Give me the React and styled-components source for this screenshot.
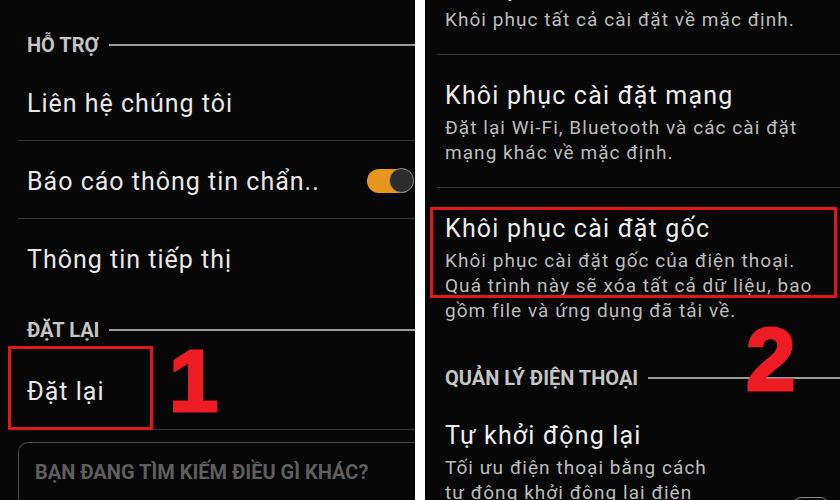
import React from "react";
import styled, { createGlobalStyle } from "styled-components";

const GlobalStyle = createGlobalStyle`
  html, body {
    margin: 0;
    padding: 0;
    background: #fff;
  }
  body {
    font-family: "Roboto", "Noto Sans", sans-serif;
  }
`;

const Frame = styled.div`
  width: 840px;
  height: 500px;
  display: flex;
  gap: 10px;
  overflow: hidden;
  background: #fff;
`;

const Screen = styled.div`
  position: relative;
  width: ${(p) => p.$w}px;
  height: 500px;
  overflow: hidden;
  background: #070707;
`;

const SectionHeader = styled.div`
  display: flex;
  align-items: center;
  gap: 10px;
  height: 24px;
  margin: ${(p) => p.$margin};
  padding-left: ${(p) => p.$indent}px;
  font-size: 20px;
  font-weight: 700;
  color: #c4c4c4;
  white-space: nowrap;

  &::after {
    content: "";
    flex: 1;
    height: 2px;
    background: #9a9a9a;
  }
`;

const Row = styled.div`
  display: flex;
  align-items: center;
  justify-content: space-between;
  box-sizing: border-box;
  height: ${(p) => p.$h || 78}px;
  margin-left: 18px;
  padding: ${(p) => p.$pt ?? 3}px 2px 0 9px;
  border-bottom: ${(p) => (p.$divider ? "1px solid #343434" : "none")};
  font-size: 25px;
  letter-spacing: 1px;
  color: #e8e8e8;
`;

const Toggle = styled.div`
  position: relative;
  width: 46px;
  height: 24px;
  border-radius: 12px;
  background: #e8951d;

  &::after {
    content: "";
    position: absolute;
    right: -1px;
    top: -1px;
    width: 23px;
    height: 23px;
    border-radius: 50%;
    background: #2c2c2c;
    border: 1.5px solid #8c8c8c;
  }
`;

const SearchBox = styled.div`
  box-sizing: border-box;
  height: 80px;
  margin: 12px 0 0 18px;
  padding: 17px 0 0 16px;
  border: 1.5px solid #484848;
  border-right: none;
  border-radius: 10px 0 0 10px;
  font-size: 20px;
  font-weight: 700;
  line-height: 24px;
  color: #5e5e5e;
  white-space: nowrap;
`;

const List = styled.div`
  margin-top: ${(p) => p.$offset || 0}px;
`;

const Setting = styled.div`
  position: relative;
  margin-left: 12px;
  padding: ${(p) => p.$pt ?? 24}px 0 22px 8px;
  border-bottom: ${(p) => (p.$divider ? "1px solid #343434" : "none")};
`;

const Title = styled.div`
  font-size: 25px;
  line-height: 34px;
  letter-spacing: 1.2px;
  color: #ededed;
`;

const Sub = styled.div`
  margin-top: 2px;
  font-size: 19px;
  line-height: 25px;
  letter-spacing: 1.05px;
  color: #bcbcbc;
  white-space: pre;
`;

const OutlineToggle = styled.div`
  position: absolute;
  right: 10px;
  top: 107px;
  width: 36px;
  height: 20px;
  border-radius: 10px;
  border: 1.5px solid #8a8a8a;
`;

const Highlight = styled.div`
  position: absolute;
  box-sizing: border-box;
  left: ${(p) => p.$x}px;
  top: ${(p) => p.$y}px;
  width: ${(p) => p.$w}px;
  height: ${(p) => p.$h}px;
  border: 3px solid #e3161d;
  pointer-events: none;
`;

const Marker = styled.div`
  position: absolute;
  left: ${(p) => p.$x}px;
  top: ${(p) => p.$y}px;
  font-family: "Liberation Sans", Arial, sans-serif;
  font-size: ${(p) => p.$size}px;
  font-weight: 700;
  line-height: 1;
  color: #ee1c24;
  -webkit-text-stroke: 3px #ee1c24;
`;

export default function App() {
  return (
    <>
      <GlobalStyle />
      <Frame>
        <Screen $w={415}>
          <SectionHeader $margin="33px 0 6px" $indent={27}>
            HỖ TRỢ
          </SectionHeader>
          <Row $divider>Liên hệ chúng tôi</Row>
          <Row $divider>
            Báo cáo thông tin chẩn..
            <Toggle />
          </Row>
          <Row>Thông tin tiếp thị</Row>
          <SectionHeader $margin="21px 0 4px" $indent={27}>
            ĐẶT LẠI
          </SectionHeader>
          <Row $h={84} $pt={8} $divider>
            Đặt lại
          </Row>
          <SearchBox>BẠN ĐANG TÌM KIẾM ĐIỀU GÌ KHÁC?</SearchBox>

          <Highlight $x={8} $y={346} $w={145} $h={84} />
          <Marker $x={169} $y={337} $size={88}>
            1
          </Marker>
        </Screen>

        <Screen $w={415}>
          <List $offset={-53}>
            <Setting $divider>
              <Title>Khôi phục cài đặt</Title>
              <Sub>Khôi phục tất cả cài đặt về mặc định.</Sub>
            </Setting>
            <Setting $divider>
              <Title>Khôi phục cài đặt mạng</Title>
              <Sub>{"Đặt lại Wi-Fi, Bluetooth và các cài đặt\nmạng khác về mặc định."}</Sub>
            </Setting>
            <Setting>
              <Title>Khôi phục cài đặt gốc</Title>
              <Sub>
                {"Khôi phục cài đặt gốc của điện thoại.\nQuá trình này sẽ xóa tất cả dữ liệu, bao\ngồm file và ứng dụng đã tải về."}
              </Sub>
            </Setting>
            <SectionHeader $margin="21px 0 0" $indent={20}>
              QUẢN LÝ ĐIỆN THOẠI
            </SectionHeader>
            <Setting $pt={29}>
              <Title>Tự khởi động lại</Title>
              <Sub>{"Tối ưu điện thoại bằng cách\ntự động khởi động lại điện"}</Sub>
              <OutlineToggle />
            </Setting>
          </List>

          <Highlight $x={5} $y={207} $w={407} $h={91} />
          <Marker $x={321} $y={315} $size={89}>
            2
          </Marker>
        </Screen>
      </Frame>
    </>
  );
}
